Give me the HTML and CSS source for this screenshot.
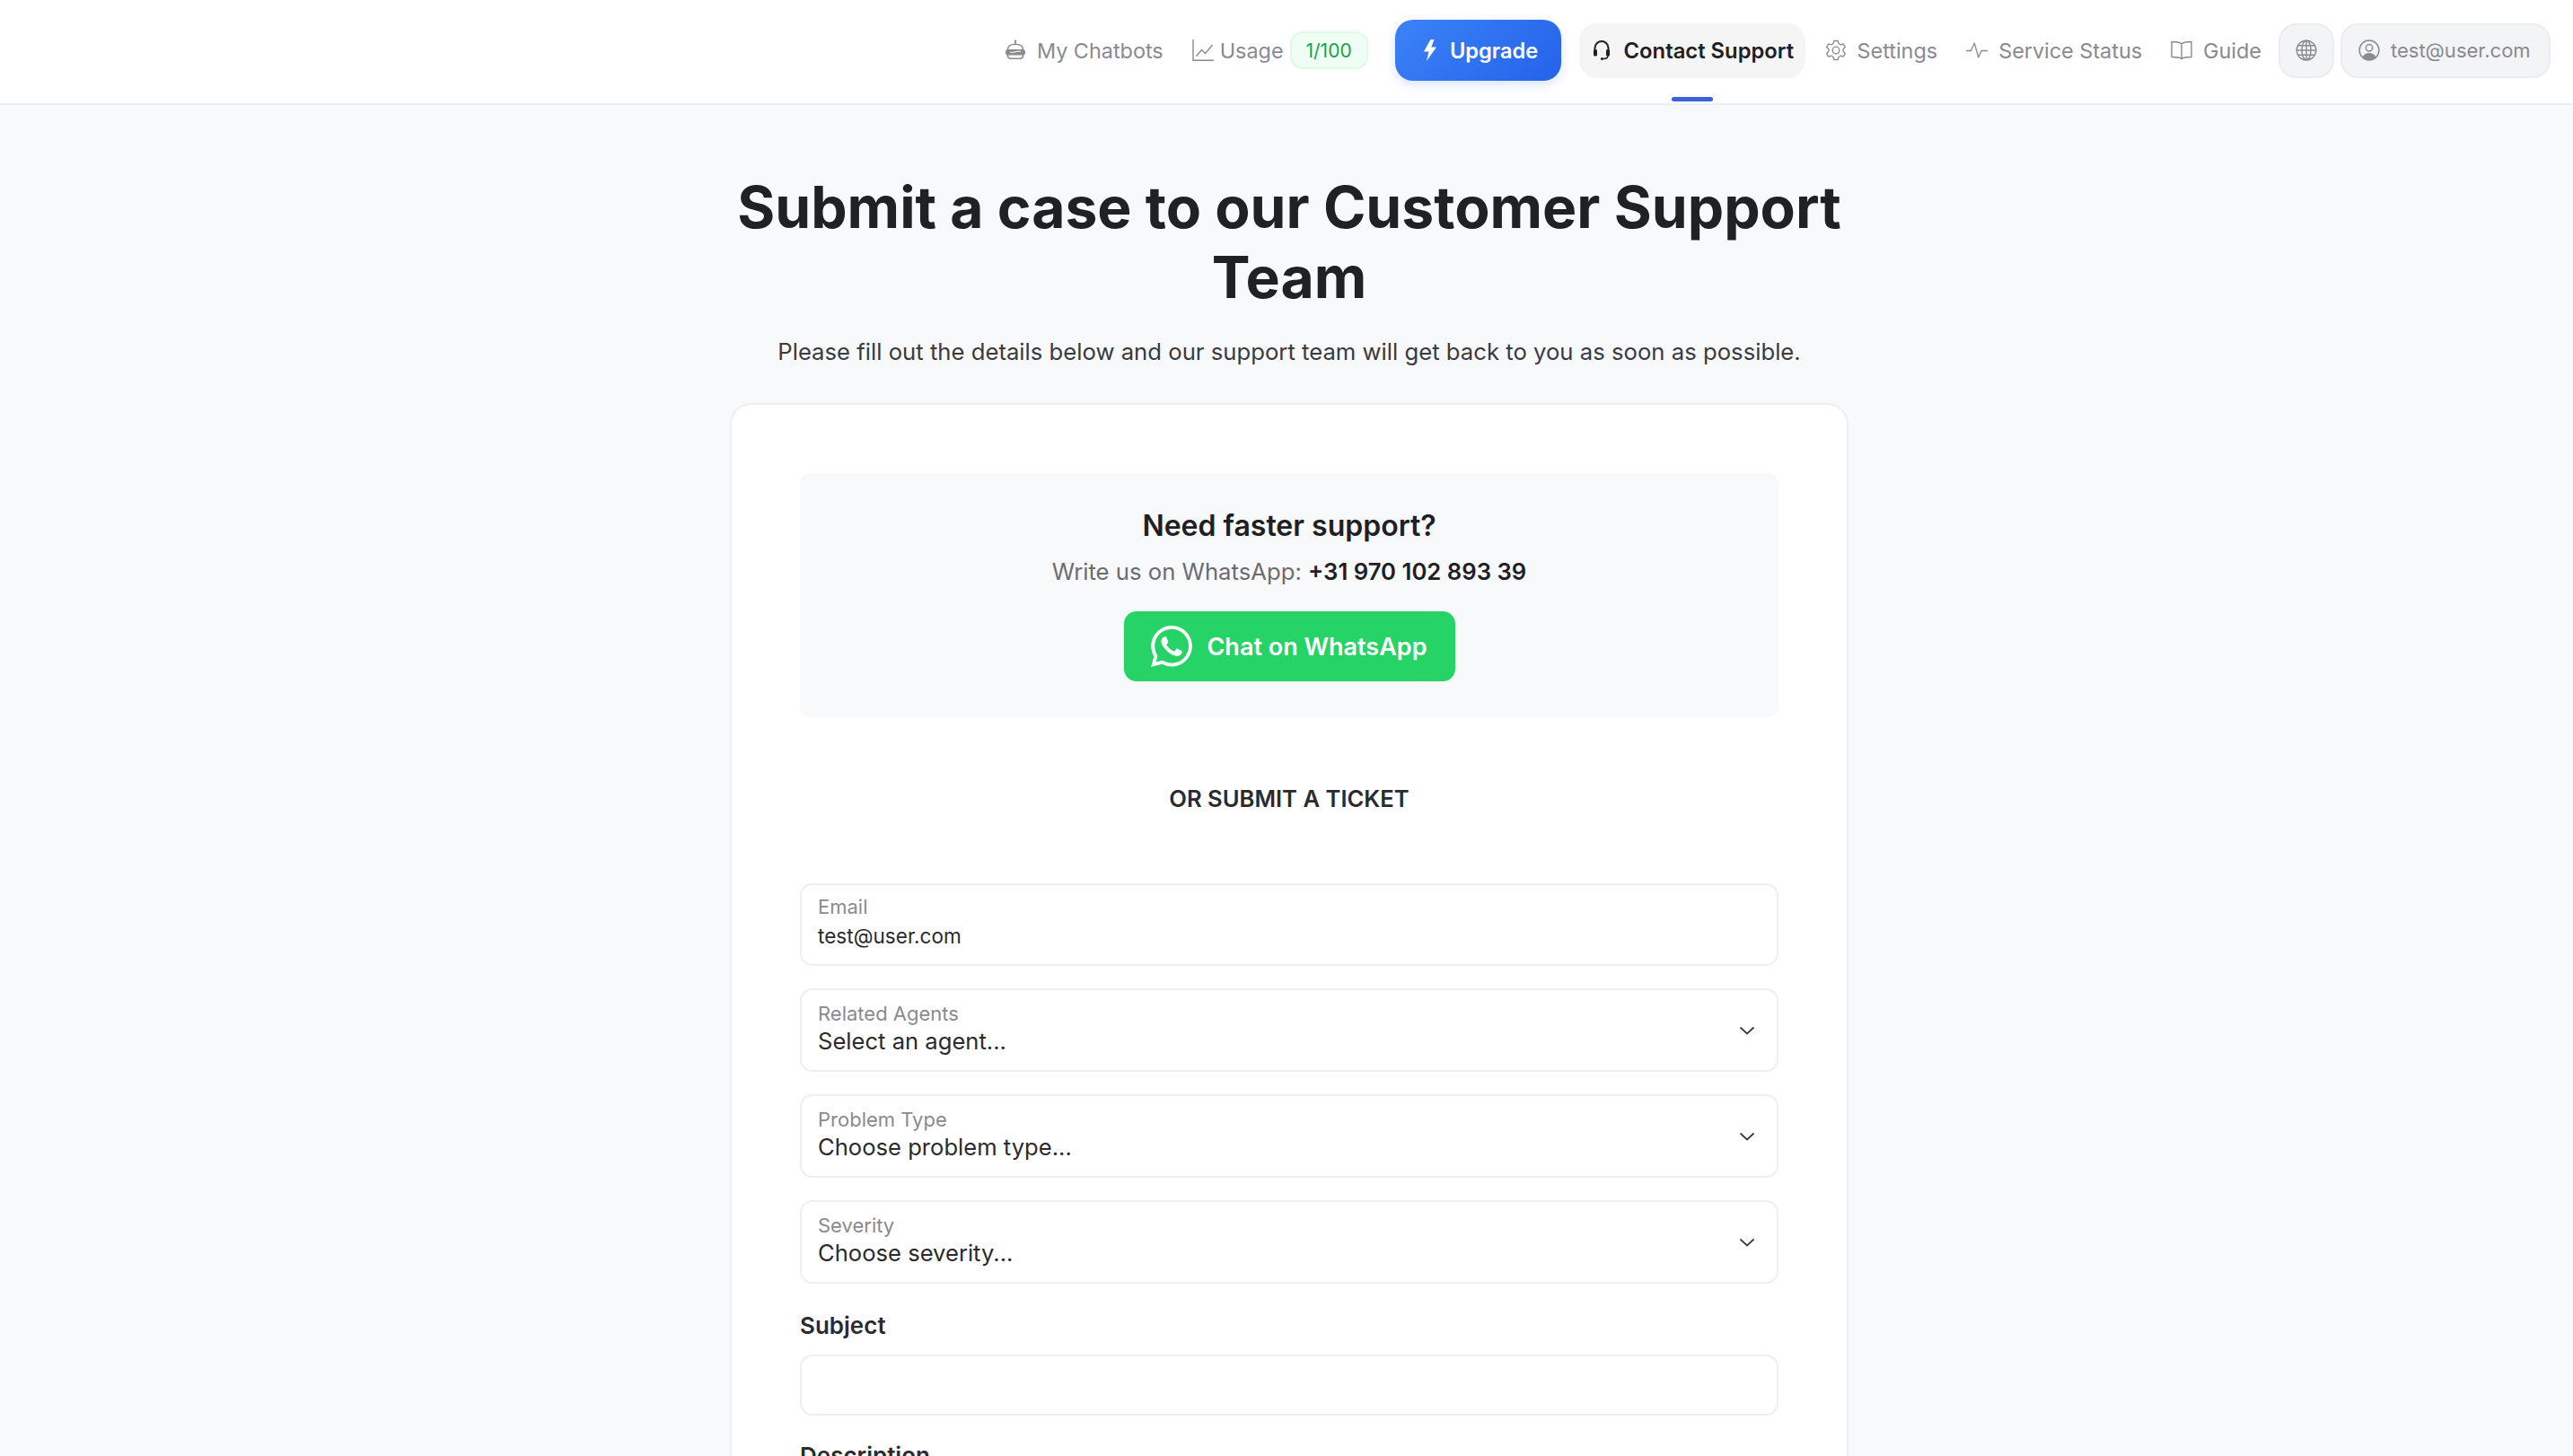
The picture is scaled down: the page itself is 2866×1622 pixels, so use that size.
FILE: index.html
```html
<!DOCTYPE html>
<html lang="en">
<head>
<meta charset="utf-8">
<title>Contact Support</title>
<link rel="stylesheet" href="styles.css">
</head>
<body>
<div class="page">
<header class="nav">
  <a class="nav-item chatbots">
    <svg class="ico" viewBox="0 0 24 24" fill="none" stroke="#8a8a8f" stroke-width="1.600"><circle cx="12" cy="1.800" r="1.300" fill="#8a8a8f" stroke="none"/><path d="M12 2v3"/><path d="M3.500 11c0-3.500 3.500-5.800 8.500-5.800s8.500 2.300 8.500 5.800v7c0 2-1.500 3.300-3.500 3.300H7c-2 0-3.500-1.300-3.500-3.300z"/><rect x="1" y="11" width="22" height="6.500" rx="2.800" fill="#8a8a8f" stroke="none"/><path d="M6 14.200h4.500l3-1H18" stroke="#fff" stroke-width="1.100"/></svg>
    <span>My Chatbots</span>
  </a>
  <a class="nav-item usage">
    <svg class="ico" viewBox="0 0 24 24" fill="none" stroke="#8a8a8f" stroke-width="1.400"><path d="M1 0v23.300h23"/><path d="M4.500 18.500l6-7 4 4L22.500 6"/></svg>
    <span>Usage</span>
    <span class="badge">1/100</span>
  </a>
  <a class="upgrade">
    <svg class="bolt" viewBox="0 0 16 24"><path d="M8.500 0L1 13.500h5.500L4 24l11-15.500H9.300L12.500 0z" fill="#fff"/></svg>
    <span>Upgrade</span>
  </a>
  <a class="contact">
    <svg class="ico-h" viewBox="0 0 20 24" fill="none" stroke="#1f2023" stroke-width="2"><path d="M2.500 13V9.500a7.500 7.500 0 0 1 15 0V13"/><rect x="1" y="11" width="4" height="7.500" rx="1.500" fill="#1f2023" stroke="none"/><rect x="15" y="11" width="4" height="7.500" rx="1.500" fill="#1f2023" stroke="none"/><path d="M17 18c0 2.500-2 3.500-5 3.500" stroke-width="1.500"/><circle cx="10.500" cy="21.500" r="1.600" fill="#1f2023" stroke="none"/></svg>
    <span>Contact Support</span>
    <i class="underline"></i>
  </a>
  <a class="nav-item settings">
    <svg class="ico" viewBox="0 0 24 24" fill="none" stroke="#8a8a8f" stroke-width="1.300" stroke-linejoin="round"><path d="M9.800 1.500h4.400l.7 3 2.300 1.300 3-.9 2.200 3.700-2.300 2.100v2.600l2.300 2.100-2.200 3.700-3-.9-2.300 1.300-.7 3H9.800l-.7-3-2.300-1.300-3 .9-2.200-3.700 2.300-2.100v-2.600L1.600 8.600l2.200-3.700 3 .9 2.300-1.300z"/><circle cx="12" cy="12" r="3.800"/></svg>
    <span>Settings</span>
  </a>
  <a class="nav-item">
    <svg class="ico" viewBox="0 0 24 24" fill="none" stroke="#8a8a8f" stroke-width="1.300" stroke-linejoin="round"><path d="M0 12.500h5.500L9.200 4l4.600 16 3.200-7.500h7"/></svg>
    <span>Service Status</span>
  </a>
  <a class="nav-item">
    <svg class="ico" viewBox="0 0 24 24" fill="none" stroke="#8a8a8f" stroke-width="1.400" stroke-linejoin="round"><path d="M12 4.800C10 3 6.500 2.500 1 2.500v17c5.500 0 9 .3 11 2 2-1.700 5.500-2 11-2v-17c-5.500 0-9 .5-11 2.300zM12 4.800v16.700"/></svg>
    <span>Guide</span>
  </a>
  <a class="pill globe">
    <svg class="ico" viewBox="0 0 24 24" fill="none" stroke="#8a8a8f" stroke-width="1.400"><circle cx="12" cy="12" r="10.800"/><ellipse cx="12" cy="12" rx="5" ry="10.800"/><path d="M12 1.200v21.600M1.200 12h21.600M2.800 6.800h18.400M2.800 17.200h18.400"/></svg>
  </a>
  <a class="pill user">
    <svg class="ico" viewBox="0 0 24 24"><circle cx="12" cy="12" r="10.900" fill="none" stroke="#8a8a8f" stroke-width="1.500"/><circle cx="12" cy="9.300" r="3.700" fill="none" stroke="#8a8a8f" stroke-width="1.500"/><path d="M4.500 19.500c1.500-3 4-4.500 7.500-4.500s6 1.500 7.500 4.500c-2 2-4.500 3-7.500 3s-5.500-1-7.500-3z" fill="#8a8a8f"/></svg>
    <span class="user-mail">test@user.com</span>
  </a>
</header>

<main class="main">
  <h1 class="title">Submit a case to our Customer Support Team</h1>
  <p class="lead">Please fill out the details below and our support team will get back to you as soon as possible.</p>

  <section class="card">
    <div class="fast">
      <h2 class="fast-title">Need faster support?</h2>
      <p class="fast-text">Write us on WhatsApp: <b>+31 970 102 893 39</b></p>
      <a class="wa">
        <svg class="wa-ico" viewBox="0 0 24 24"><path fill="#fff" d="M17.472 14.382c-.297-.149-1.758-.867-2.030-.967-.273-.099-.471-.148-.670.150-.197.297-.767.966-.940 1.164-.173.199-.347.223-.644.075-.297-.150-1.255-.463-2.390-1.475-.883-.788-1.480-1.761-1.653-2.059-.173-.297-.018-.458.130-.606.134-.133.298-.347.446-.520.149-.174.198-.298.298-.497.099-.198.050-.371-.025-.520-.075-.149-.669-1.612-.916-2.207-.242-.579-.487-.500-.669-.510-.173-.008-.371-.010-.570-.010-.198 0-.520.074-.792.372-.272.297-1.040 1.016-1.040 2.479 0 1.462 1.065 2.875 1.213 3.074.149.198 2.096 3.200 5.077 4.487.709.306 1.262.489 1.694.625.712.227 1.360.195 1.871.118.571-.085 1.758-.719 2.006-1.413.248-.694.248-1.289.173-1.413-.074-.124-.272-.198-.570-.347m-5.421 7.403h-.004a9.870 9.870 0 0 1-5.031-1.378l-.361-.214-3.741.982.998-3.648-.235-.374a9.860 9.860 0 0 1-1.510-5.260c.001-5.450 4.436-9.884 9.888-9.884 2.640 0 5.122 1.030 6.988 2.898a9.825 9.825 0 0 1 2.893 6.994c-.003 5.450-4.437 9.884-9.885 9.884m8.413-18.297A11.815 11.815 0 0 0 12.050 0C5.495 0 .160 5.335.157 11.892c0 2.096.547 4.142 1.588 5.945L.057 24l6.305-1.654a11.882 11.882 0 0 0 5.683 1.448h.005c6.554 0 11.890-5.335 11.893-11.893a11.821 11.821 0 0 0-3.480-8.413z"/></svg>
        <span>Chat on WhatsApp</span>
      </a>
    </div>

    <h3 class="or">OR SUBMIT A TICKET</h3>

    <div class="field email">
      <label class="fl">Email</label>
      <div class="val-sm">test@user.com</div>
    </div>
    <div class="field sel">
      <div class="sel-text"><label class="fl">Related Agents</label><div class="val">Select an agent...</div></div>
      <svg class="chev" viewBox="0 0 18 10"><path d="M1.500 1.500L9 8.500l7.500-7" fill="none" stroke="#3c3c40" stroke-width="1.800"/></svg>
    </div>
    <div class="field sel">
      <div class="sel-text"><label class="fl">Problem Type</label><div class="val">Choose problem type...</div></div>
      <svg class="chev" viewBox="0 0 18 10"><path d="M1.500 1.500L9 8.500l7.500-7" fill="none" stroke="#3c3c40" stroke-width="1.800"/></svg>
    </div>
    <div class="field sel">
      <div class="sel-text"><label class="fl">Severity</label><div class="val">Choose severity...</div></div>
      <svg class="chev" viewBox="0 0 18 10"><path d="M1.500 1.500L9 8.500l7.500-7" fill="none" stroke="#3c3c40" stroke-width="1.800"/></svg>
    </div>

    <label class="lbl">Subject</label>
    <div class="input"></div>
    <label class="lbl desc">Description</label>
  </section>
</main>
</div>
</body>
</html>
```

FILE: styles.css
```css
* { box-sizing: border-box; }
html, body { margin: 0; padding: 0; }
body { font-family: Inter, "Liberation Sans", sans-serif; background: #f8f9fb; color: #1f2023; }
.page { height: 1622px; overflow: hidden; }

.nav { height: 117px; background: #fff; border-bottom: 2px solid #eeeef2; display: flex; align-items: center; justify-content: flex-end; padding: 0 25px 3px 0; font-size: 23.4px; color: #8a8a8f; }
.nav-item { display: flex; align-items: center; gap: 12px; padding: 0 16px; }
.usage { gap: 7px; }
.settings { padding-left: 22px; }
.ico { width: 24px; height: 24px; flex: none; }
.badge { font-size: 21px; color: #16a34a; background: #f0fdf4; border: 2px solid #dcfce7; border-radius: 14px; height: 42px; width: 87px; display: flex; align-items: center; justify-content: center; }
.upgrade { margin: 0 20px 0 14px; width: 185px; height: 68px; padding-left: 6px; border-radius: 20px; background: linear-gradient(135deg, #3b82f6, #2563eb); box-shadow: 0 4px 12px rgba(37, 99, 235, .18); color: #fff; font-size: 23.6px; font-weight: 600; display: flex; align-items: center; justify-content: center; gap: 14px; }
.bolt { width: 16px; height: 24px; }
.contact { position: relative; width: 252px; height: 61px; background: #f5f5f6; border-radius: 20px; padding-left: 15px; display: flex; align-items: center; gap: 15px; color: #1f2023; font-size: 23.8px; font-weight: 600; }
.ico-h { width: 20px; height: 24px; }
.underline { position: absolute; left: 103px; bottom: -26px; width: 46px; height: 5px; border-radius: 3px; background: #3a63d8; }
.pill { height: 61px; background: #f3f4f6; border: 2px solid #ececf0; border-radius: 20px; display: flex; align-items: center; gap: 12px; }
.globe { width: 62px; justify-content: center; margin: 0 7px 0 3px; }
.user { padding: 0 18px; width: 234px; }
.user-mail { font-size: 22px; }

.main { display: flex; flex-direction: column; align-items: center; padding: 75px 0 0 6px; }
.title { width: 1280px; margin: 0; text-align: center; font-size: 64.2px; line-height: 78px; font-weight: 700; color: #202124; }
.lead { margin: 26px 0 0; font-size: 25.7px; line-height: 36px; color: #3a3b3f; }
.card { width: 1246px; margin-top: 39px; background: #fff; border: 2px solid #eeeff3; border-radius: 24px; padding: 76px; }
.fast { height: 272px; background: #f8f9fb; border-radius: 12px; display: flex; flex-direction: column; align-items: center; padding-top: 37px; }
.fast-title { margin: 0; font-size: 32px; line-height: 44px; font-weight: 600; }
.fast-text { margin: 11px 0 0; font-size: 25.7px; line-height: 36px; color: #6b6c70; }
.fast-text b { color: #1f2023; font-weight: 600; }
.wa { margin-top: 26px; width: 369px; height: 78px; background: #25d366; border-radius: 14px; color: #fff; font-size: 27px; font-weight: 600; display: flex; align-items: center; justify-content: center; gap: 16px; }
.wa-ico { width: 46px; height: 46px; }
.or { margin: 73px 0 0; text-align: center; font-size: 25.6px; line-height: 36px; font-weight: 600; color: #2a2b2e; }
.field { border: 2px solid #eeeff3; border-radius: 14px; background: #fff; padding: 0 18px; display: flex; }
.email { margin-top: 76px; height: 92px; flex-direction: column; padding-top: 9px; }
.sel { margin-top: 25px; height: 93px; align-items: center; justify-content: space-between; }
.sel-text { padding-bottom: 6px; }
.fl { display: block; font-size: 22px; line-height: 30px; color: #8a8a8f; }
.val-sm { font-size: 22.6px; line-height: 32px; margin-top: 2px; color: #2a2b2e; }
.val { font-size: 25.6px; line-height: 32px; color: #2a2b2e; }
.chev { width: 18px; height: 10px; margin-right: 6px; }
.lbl { display: block; margin-top: 29px; font-size: 26px; line-height: 36px; font-weight: 600; color: #2a2b2e; }
.input { height: 68px; margin-top: 14px; border: 2px solid #eeeff3; border-radius: 14px; background: #fff; }
.desc { margin-top: 27px; }
```
